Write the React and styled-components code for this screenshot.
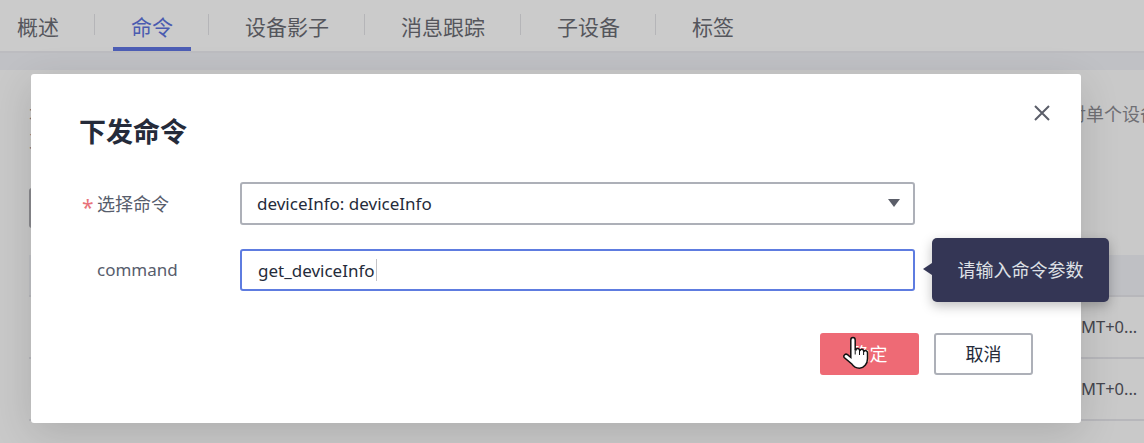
import React from "react";
import styled, { createGlobalStyle } from "styled-components";

const FONT = `"Noto Sans", "Noto Sans CJK SC", sans-serif`;

const GlobalStyle = createGlobalStyle`
  html, body {
    margin: 0;
    padding: 0;
    height: 100%;
    overflow: hidden;
    background: #c9c9c9;
    font-family: ${FONT};
  }
`;

const Page = styled.div`
  position: relative;
  width: 1144px;
  height: 443px;
  overflow: hidden;
  background: #c9c9c9;
`;

const TabBar = styled.div`
  display: flex;
  align-items: flex-start;
  height: 53px;
  box-sizing: border-box;
  background: #cbcbcb;
  border-bottom: 2px solid #bcbcc0;
`;

const Tab = styled.div`
  box-sizing: border-box;
  height: 51px;
  padding: 11px 18px 0;
  margin: 0 17px 0 18px;
  font-size: 21px;
  line-height: 32px;
  white-space: nowrap;
  color: ${(p) => (p.$active ? "#4a5bb0" : "#55565c")};
  border-bottom: 4px solid ${(p) => (p.$active ? "#4d5eb5" : "transparent")};
  &:first-child {
    padding-left: 17px;
    margin-left: 0;
  }
`;

const TabDivider = styled.span`
  flex: none;
  width: 1px;
  height: 21px;
  margin-top: 14px;
  background: #b5b5b8;
`;

const Strip = styled.div`
  height: 17px;
  background: #c0c1c5;
`;

const Intro = styled.div`
  display: flex;
  justify-content: space-between;
  padding: 31px 0 0 29px;
  font-size: 18px;
  line-height: 26px;
  color: #6f6f74;
  white-space: nowrap;
`;

const IntroEnd = styled.span`
  flex: none;
  width: 76px;
`;

const Toolbar = styled.div`
  margin: 35px 0 0 29px;
`;

const CreateButton = styled.div`
  width: 120px;
  height: 40px;
  border-radius: 3px;
  background: #8a8a8e;
`;

const BackTable = styled.div`
  margin: 27px 0 0 29px;
`;

const BackHead = styled.div`
  height: 40px;
  background: #bfc0c4;
  border-bottom: 2px solid #b7b7bb;
`;

const BackRow = styled.div`
  height: 62px;
  box-sizing: border-box;
  padding-left: 1052px;
  border-bottom: 2px solid #b7b7bb;
  font-size: 16.500px;
  line-height: 60px;
  color: #44454d;
  white-space: nowrap;
`;

const Modal = styled.div`
  position: absolute;
  left: 31px;
  top: 74px;
  width: 1050px;
  height: 349px;
  box-sizing: border-box;
  padding: 41px 48px 0;
  background: #fff;
  border-radius: 3px;
  box-shadow: 0 10px 40px rgba(0, 0, 0, 0.14);
`;

const CloseButton = styled.button`
  position: absolute;
  top: 29px;
  right: 29px;
  width: 20px;
  height: 20px;
  padding: 0;
  border: 0;
  background: none;
  display: block;
`;

const Title = styled.h2`
  margin: 0 0 33px;
  font-size: 27px;
  line-height: 34px;
  font-weight: 700;
  color: #252b3a;
`;

const Row = styled.div`
  display: flex;
  align-items: center;
  margin-bottom: 24px;
`;

const Label = styled.label`
  position: relative;
  width: 161px;
  box-sizing: border-box;
  padding-left: 18px;
  font-size: ${(p) => p.$size}px;
  line-height: 24px;
  color: #575d6c;
`;

const Star = styled.span`
  position: absolute;
  left: 3px;
  top: 3px;
  font-size: 21px;
  color: #e8737b;
`;

const Field = styled.div`
  position: relative;
  display: flex;
  align-items: center;
  box-sizing: border-box;
  width: 675px;
  height: ${(p) => (p.$focus ? "42px" : "43px")};
  padding: 0 ${(p) => (p.$focus ? "16px" : "15px")};
  border: 2px solid ${(p) => (p.$focus ? "#5e7ce0" : "#adb0b8")};
  border-radius: 3px;
  font-size: 17px;
  color: #252b3a;
  white-space: nowrap;
`;

const Caret = styled.span`
  width: 1px;
  height: 22px;
  margin-left: 1px;
  background: #c4c4c8;
`;

const Arrow = styled.span`
  position: absolute;
  right: 13px;
  top: 15px;
  width: 0;
  height: 0;
  border-left: 6px solid transparent;
  border-right: 6px solid transparent;
  border-top: 8px solid #5b5e69;
`;

const Tooltip = styled.div`
  position: absolute;
  left: 932px;
  top: 238px;
  width: 177px;
  height: 64px;
  border-radius: 5px;
  background: #343655;
  color: #dfe1e6;
  font-size: 18px;
  line-height: 64px;
  text-align: center;
  box-shadow: 0 4px 12px rgba(0, 0, 0, 0.25);
  &::before {
    content: "";
    position: absolute;
    left: -9px;
    top: 25px;
    border-top: 6px solid transparent;
    border-bottom: 6px solid transparent;
    border-right: 9px solid #343655;
  }
`;

const Footer = styled.div`
  display: flex;
  justify-content: flex-end;
  gap: 15px;
  margin-top: 42px;
`;

const Button = styled.button`
  width: 99px;
  height: 42px;
  box-sizing: border-box;
  padding: 0 0 2px;
  border-radius: 3px;
  border: 2px solid ${(p) => (p.$primary ? "#ee6a75" : "#adb0b8")};
  background: ${(p) => (p.$primary ? "#ee6a75" : "#fff")};
  color: ${(p) => (p.$primary ? "#fff" : "#252b3a")};
  font-family: ${FONT};
  font-size: 18px;
`;

const Pointer = styled.svg`
  position: absolute;
  left: 843px;
  top: 336px;
`;

const tabs = [
  { label: "概述" },
  { label: "命令", active: true },
  { label: "设备影子" },
  { label: "消息跟踪" },
  { label: "子设备" },
  { label: "标签" },
];

export default function App() {
  return (
    <Page>
      <GlobalStyle />
      <TabBar>
        {tabs.map((t, i) => (
          <React.Fragment key={t.label}>
            {i > 0 && <TabDivider />}
            <Tab $active={t.active}>{t.label}</Tab>
          </React.Fragment>
        ))}
      </TabBar>
      <Strip />
      <Intro>
        <span>
          本
          <br />
          支
        </span>
        <IntroEnd>对单个设备</IntroEnd>
      </Intro>
      <Toolbar>
        <CreateButton />
      </Toolbar>
      <BackTable>
        <BackHead />
        <BackRow>MT+0...</BackRow>
        <BackRow>MT+0...</BackRow>
      </BackTable>
      <Modal>
        <CloseButton aria-label="close">
          <svg width="20" height="20" viewBox="0 0 20 20" fill="none">
            <path d="M3 3l14 14M17 3L3 17" stroke="#5b5e69" strokeWidth="2" />
          </svg>
        </CloseButton>
        <Title>下发命令</Title>
        <Row>
          <Label $size={18}>
            <Star>*</Star>选择命令
          </Label>
          <Field>
            deviceInfo: deviceInfo
            <Arrow />
          </Field>
        </Row>
        <Row>
          <Label $size={17}>command</Label>
          <Field $focus>
            get_deviceInfo
            <Caret />
          </Field>
        </Row>
        <Footer>
          <Button $primary>确定</Button>
          <Button>取消</Button>
        </Footer>
      </Modal>
      <Tooltip>请输入命令参数</Tooltip>
      <Pointer width="26" height="34" viewBox="0 0 26 34">
        <path
          d="M10 1.500c1.200 0 2.200 1 2.200 2.500v9.500l.8.2c.2-1.700 3.200-1.700 3.500.2l.6.3c.4-1.600 3.300-1.300 3.500.7l.5.3c.6-1.200 3.400-.6 3.400 1.500v6c0 5-3.500 9.500-8 9.500-3.500 0-6-1.500-8-4.500L1.200 21.500c-1.300-2.200 1.300-4.300 3.300-2.800l3.300 2.800V4c0-1.500 1-2.500 2.200-2.500z"
          fill="#fff"
          stroke="#111"
          strokeWidth="1.500"
        />
        <path d="M12.200 13.500v5M16.500 14v5M20.600 15v4" fill="none" stroke="#111" strokeWidth="1" />
      </Pointer>
    </Page>
  );
}
